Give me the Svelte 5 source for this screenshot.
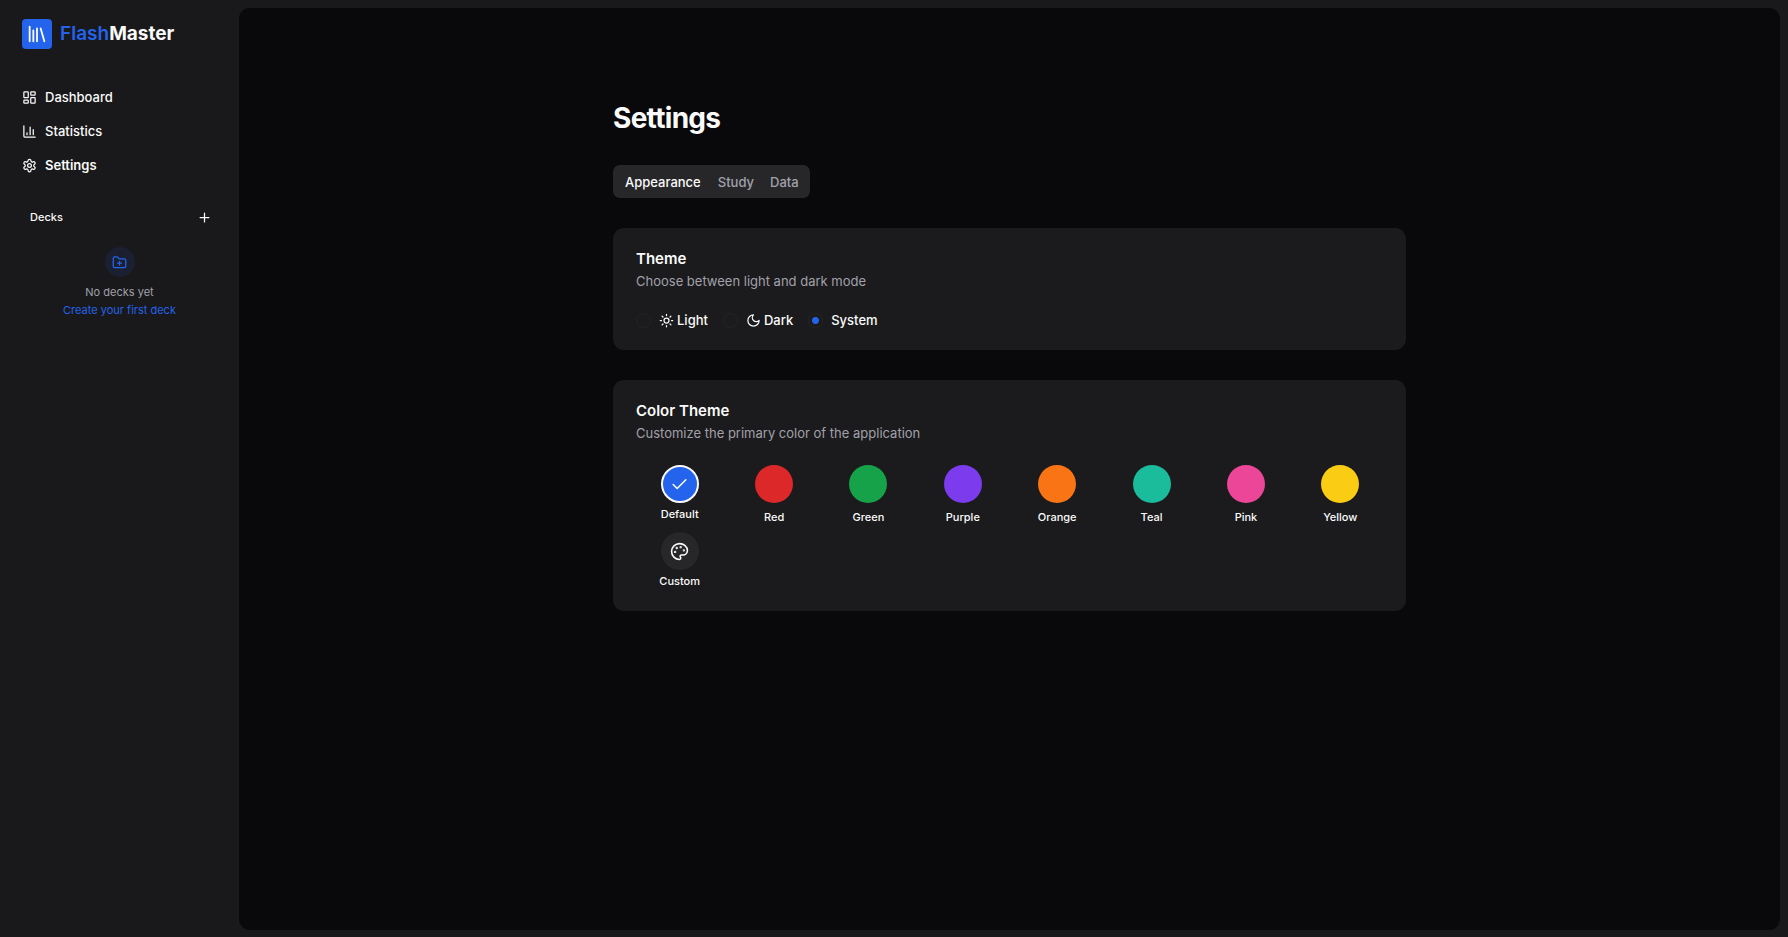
<script>
  const nav = [
    { label: 'Dashboard', icon: 'dashboard' },
    { label: 'Statistics', icon: 'chart' },
    { label: 'Settings', icon: 'settings', active: true }
  ];
  const tabs = ['Appearance', 'Study', 'Data'];
  const themes = [
    { label: 'Light', icon: 'sun' },
    { label: 'Dark', icon: 'moon' },
    { label: 'System' }
  ];
  const colors = [
    { label: 'Red', value: '#dc2828' },
    { label: 'Green', value: '#16a249' },
    { label: 'Purple', value: '#7c3bed' },
    { label: 'Orange', value: '#f97415' },
    { label: 'Teal', value: '#1bbc9b' },
    { label: 'Pink', value: '#ec4699' },
    { label: 'Yellow', value: '#facc14' }
  ];
  let tab = $state('Appearance');
  let theme = $state('System');
</script>

{#snippet icon(name)}
  <svg class="icon {name}" viewBox="0 0 24 24" fill="none" stroke="currentColor" stroke-width="2" stroke-linecap="round" stroke-linejoin="round" aria-hidden="true">
    {#if name === 'dashboard'}
      <rect width="7" height="9" x="3" y="3" rx="1" /><rect width="7" height="5" x="14" y="3" rx="1" /><rect width="7" height="9" x="14" y="12" rx="1" /><rect width="7" height="5" x="3" y="16" rx="1" />
    {:else if name === 'chart'}
      <path d="M3 3v16a2 2 0 0 0 2 2h16M18 17V9M13 17V5M8 17v-3" />
    {:else if name === 'settings'}
      <path d="M12.22 2h-.44a2 2 0 0 0-2 2v.18a2 2 0 0 1-1 1.73l-.43.25a2 2 0 0 1-2 0l-.15-.08a2 2 0 0 0-2.73.73l-.22.38a2 2 0 0 0 .73 2.73l.15.1a2 2 0 0 1 1 1.72v.51a2 2 0 0 1-1 1.74l-.15.09a2 2 0 0 0-.73 2.73l.22.38a2 2 0 0 0 2.73.73l.15-.08a2 2 0 0 1 2 0l.43.25a2 2 0 0 1 1 1.73V20a2 2 0 0 0 2 2h.44a2 2 0 0 0 2-2v-.18a2 2 0 0 1 1-1.73l.43-.25a2 2 0 0 1 2 0l.15.08a2 2 0 0 0 2.73-.73l.22-.39a2 2 0 0 0-.73-2.73l-.15-.08a2 2 0 0 1-1-1.74v-.5a2 2 0 0 1 1-1.74l.15-.09a2 2 0 0 0 .73-2.73l-.22-.38a2 2 0 0 0-2.73-.73l-.15.08a2 2 0 0 1-2 0l-.43-.25a2 2 0 0 1-1-1.73V4a2 2 0 0 0-2-2z" /><circle cx="12" cy="12" r="3" />
    {:else if name === 'library'}
      <path d="m16 6 4 14M12 6v14M8 8v12M4 4v16" />
    {:else if name === 'plus'}
      <path d="M5 12h14M12 5v14" />
    {:else if name === 'folder'}
      <path d="M12 10v6M9 13h6" /><path d="M20 20a2 2 0 0 0 2-2V8a2 2 0 0 0-2-2h-7.9a2 2 0 0 1-1.69-.9L9.6 3.9A2 2 0 0 0 7.93 3H4a2 2 0 0 0-2 2v13a2 2 0 0 0 2 2Z" />
    {:else if name === 'sun'}
      <circle cx="12" cy="12" r="4" /><path d="M12 2v2M12 20v2M4.93 4.93l1.41 1.41M17.66 17.66l1.41 1.41M2 12h2M20 12h2M6.34 17.66l-1.41 1.41M19.07 4.93l-1.41 1.41" />
    {:else if name === 'moon'}
      <path d="M12 3a6 6 0 0 0 9 9 9 9 0 1 1-9-9Z" />
    {:else if name === 'check'}
      <path d="M20 6 9 17l-5-5" />
    {:else if name === 'palette'}
      <g fill="currentColor"><circle cx="13.5" cy="6.5" r=".5" /><circle cx="17.5" cy="10.5" r=".5" /><circle cx="8.5" cy="7.5" r=".5" /><circle cx="6.5" cy="12.5" r=".5" /></g>
      <path d="M12 2C6.5 2 2 6.5 2 12s4.5 10 10 10c.926 0 1.648-.746 1.648-1.688 0-.437-.18-.835-.437-1.125-.29-.289-.438-.652-.438-1.125a1.64 1.64 0 0 1 1.668-1.668h1.996c3.051 0 5.555-2.503 5.555-5.554C21.965 6.012 17.461 2 12 2z" />
    {/if}
  </svg>
{/snippet}

<div class="app">
  <aside>
    <a class="brand" href="#home">
      <span class="mark">{@render icon('library')}</span>
      <span class="name"><b>Flash</b>Master</span>
    </a>
    <nav>
      {#each nav as item}
        <a href="#{item.icon}" class:active={item.active}>{@render icon(item.icon)}<span>{item.label}</span></a>
      {/each}
    </nav>
    <div class="decks">
      <span>Decks</span>
      <button aria-label="Add deck">{@render icon('plus')}</button>
    </div>
    <div class="empty">
      <span class="badge">{@render icon('folder')}</span>
      <span>No decks yet</span>
      <button>Create your first deck</button>
    </div>
  </aside>

  <main>
    <div class="content">
      <h1>Settings</h1>
      <div class="tabs" role="tablist">
        {#each tabs as t}
          <button role="tab" aria-selected={tab === t} onclick={() => (tab = t)}>{t}</button>
        {/each}
      </div>

      <section>
        <h2>Theme</h2>
        <p>Choose between light and dark mode</p>
        <div class="radios">
          {#each themes as t}
            <label>
              <input type="radio" name="theme" value={t.label} bind:group={theme} />
              {#if t.icon}{@render icon(t.icon)}{/if}
              <span>{t.label}</span>
            </label>
          {/each}
        </div>
      </section>

      <section>
        <h2>Color Theme</h2>
        <p>Customize the primary color of the application</p>
        <div class="swatches">
          <button class="swatch tight">
            <span class="dot chosen">{@render icon('check')}</span>
            <span>Default</span>
          </button>
          {#each colors as c}
            <button class="swatch">
              <span class="dot" style="background: {c.value}"></span>
              <span>{c.label}</span>
            </button>
          {/each}
          <button class="swatch tight">
            <span class="dot custom">{@render icon('palette')}</span>
            <span>Custom</span>
          </button>
        </div>
      </section>
    </div>
  </main>
</div>

<style>
  :global(body) {
    margin: 0;
    background: #19191b;
  }
  .app {
    display: flex;
    min-height: 100vh;
    box-sizing: border-box;
    padding: 8px 8px 7px 0;
    background: #19191b;
    color: #fafafa;
    font: 500 13px/20px Inter, sans-serif;
  }
  button {
    border: 0;
    padding: 0;
    background: none;
    color: inherit;
    font: inherit;
    cursor: pointer;
  }
  a {
    color: inherit;
    text-decoration: none;
  }
  .icon {
    width: 15px;
    height: 15px;
    flex: none;
    display: block;
  }
  aside {
    width: 239px;
    flex: none;
    box-sizing: border-box;
    padding: 11px 15px 0;
  }
  .brand {
    display: flex;
    align-items: center;
    gap: 8px;
    padding: 0 7px;
  }
  .mark {
    display: grid;
    place-items: center;
    width: 30px;
    height: 30px;
    border-radius: 4px;
    background: #2463eb;
  }
  .mark .icon {
    width: 22px;
    height: 22px;
  }
  .name {
    font-size: 19px;
    font-weight: 700;
    line-height: 28px;
  }
  .name b {
    color: #2463eb;
    font-weight: 600;
  }
  nav {
    display: flex;
    flex-direction: column;
    gap: 4px;
    margin-top: 33px;
  }
  nav a {
    display: flex;
    align-items: center;
    gap: 8px;
    height: 30px;
    padding: 0 7px;
  }
  nav a.active {
    font-weight: 600;
  }
  .decks {
    display: flex;
    align-items: center;
    justify-content: space-between;
    margin-top: 22px;
    padding: 0 5px 0 15px;
    font-size: 11px;
  }
  .decks button {
    display: grid;
    place-items: center;
    width: 30px;
    height: 30px;
  }
  .empty {
    display: flex;
    flex-direction: column;
    align-items: center;
    margin-top: 15px;
    color: #a1a1aa;
    font-size: 11px;
    font-weight: 400;
    line-height: 18px;
  }
  .empty button {
    color: #2463eb;
  }
  .badge {
    display: grid;
    place-items: center;
    width: 30px;
    height: 30px;
    margin-bottom: 6px;
    border-radius: 50%;
    background: #1a2030;
    color: #2463eb;
  }
  main {
    flex: 1;
    min-width: 0;
    border-radius: 11px;
    background: #09090b;
  }
  .content {
    box-sizing: border-box;
    max-width: 793px;
    margin: 0 auto;
    padding: 93px 0 30px;
  }
  h1 {
    margin: 0;
    font-size: 28px;
    font-weight: 700;
    line-height: 34px;
    letter-spacing: -0.025em;
  }
  .tabs {
    display: inline-flex;
    gap: 1px;
    box-sizing: border-box;
    height: 33px;
    margin-top: 30px;
    padding: 4px;
    border-radius: 7px;
    background: #27272a;
    vertical-align: top;
  }
  .tabs button {
    padding: 0 7px 0 8px;
    border-radius: 4px;
    color: #a1a1aa;
  }
  .tabs button[aria-selected='true'] {
    padding-right: 8px;
    color: #fafafa;
  }
  section {
    margin-top: 30px;
    padding: 22px 22px 22px 23px;
    border-radius: 11px;
    background: #1b1b1d;
  }
  h2 {
    margin: 0;
    font-size: 15px;
    font-weight: 600;
    line-height: 17px;
  }
  p {
    margin: 4px 0 0;
    color: #a1a1aa;
    font-weight: 400;
    line-height: 20px;
  }
  .radios {
    display: flex;
    gap: 15px;
    margin-top: 22px;
  }
  label {
    display: flex;
    align-items: center;
    line-height: 15px;
  }
  input {
    appearance: none;
    width: 15px;
    height: 15px;
    margin: 0 8px 0 0;
    border: 1px solid #242427;
    border-radius: 50%;
  }
  input:checked {
    background: radial-gradient(circle, #2463eb 3px, transparent 4px);
  }
  label .icon {
    margin-right: 3px;
  }
  .swatches {
    display: grid;
    grid-template-columns: repeat(8, 1fr);
    gap: 7px;
    margin-top: 22px;
  }
  .swatch {
    display: flex;
    flex-direction: column;
    align-items: center;
    gap: 7px;
    font-size: 11px;
    line-height: 15px;
  }
  .swatch.tight {
    gap: 4px;
  }
  .dot {
    display: grid;
    place-items: center;
    box-sizing: border-box;
    width: 38px;
    height: 38px;
    border-radius: 50%;
  }
  .chosen {
    border: 2px solid #fafafa;
    background: #2463eb;
  }
  .custom {
    background: #27272a;
  }
  .dot .icon {
    width: 19px;
    height: 19px;
  }
</style>
